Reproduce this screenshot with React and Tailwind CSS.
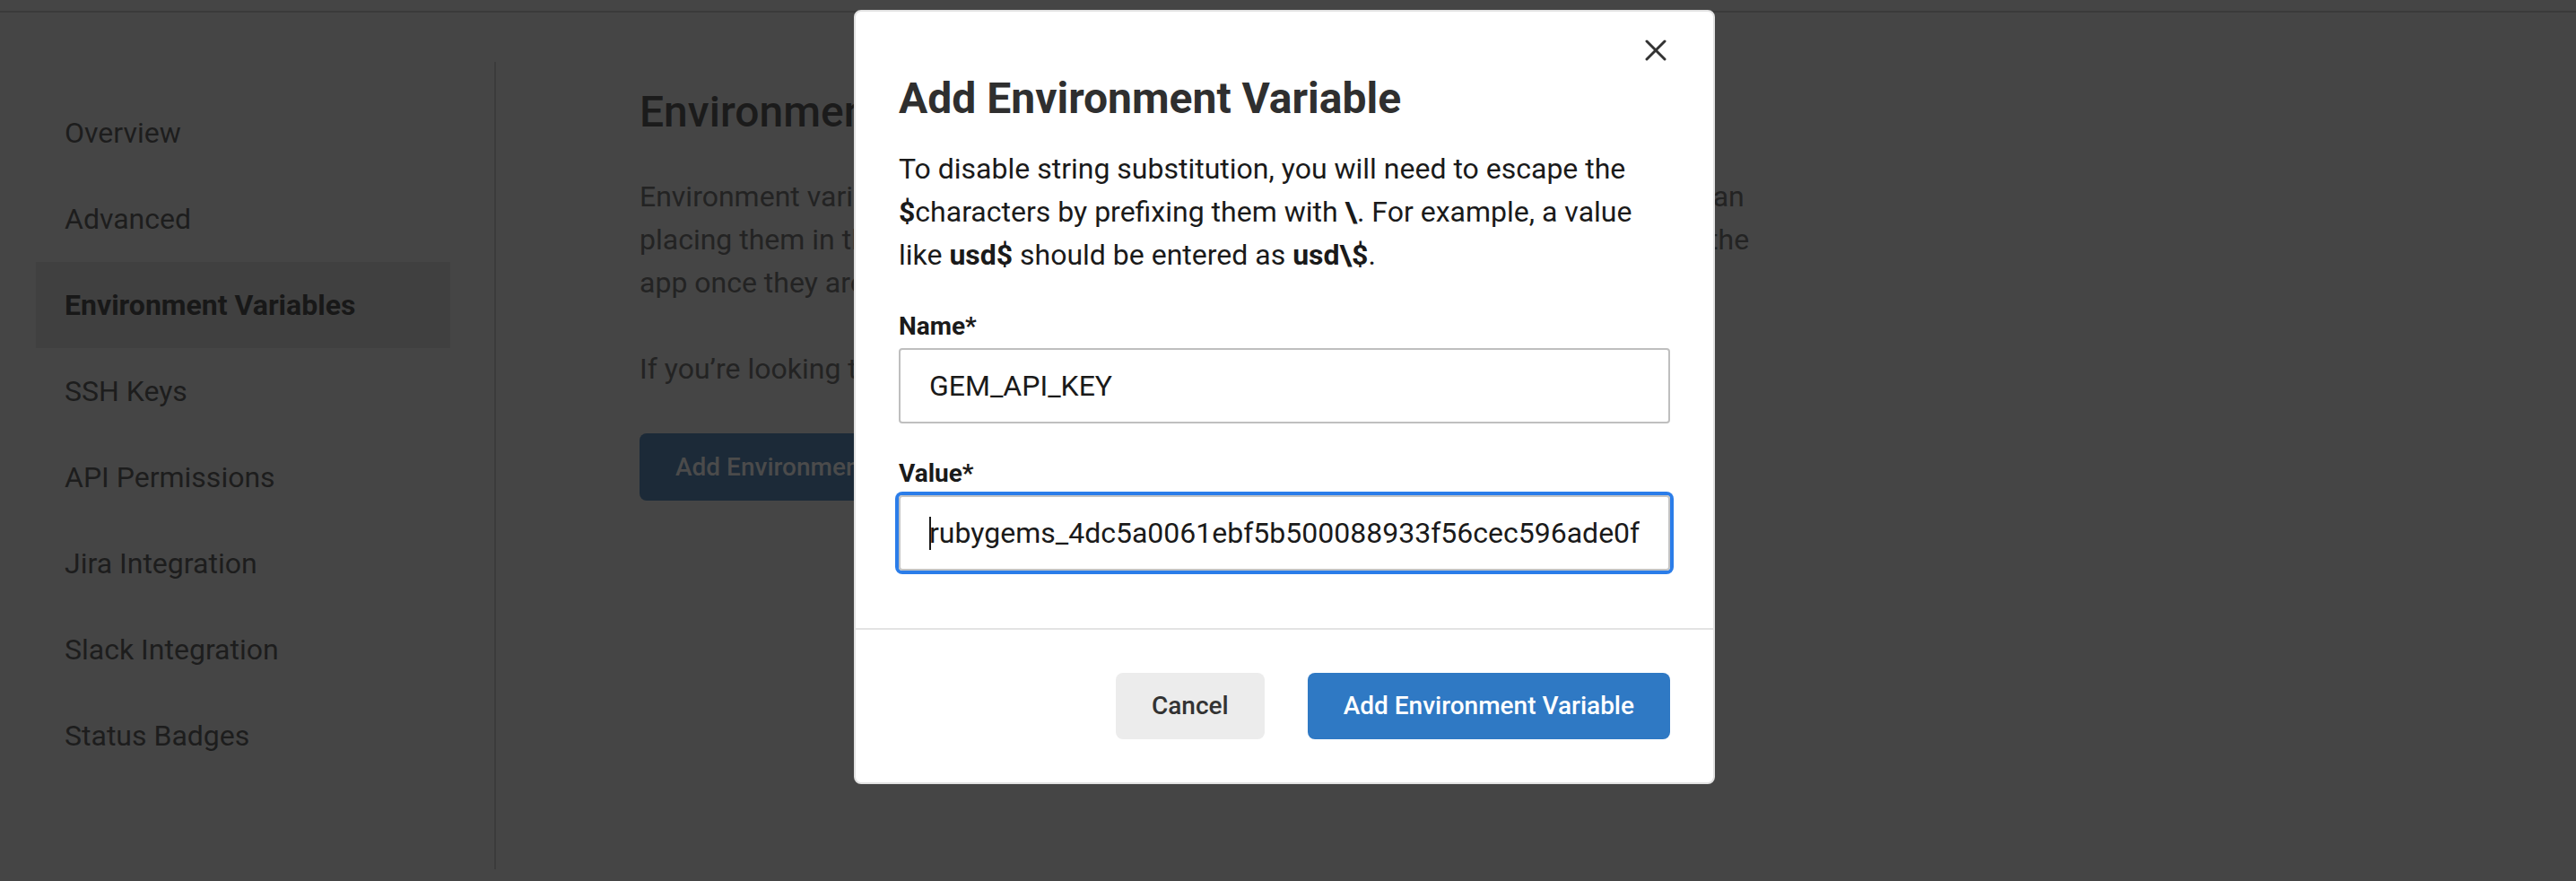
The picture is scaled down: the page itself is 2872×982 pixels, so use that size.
import { useState } from "react";

const navItems = [
  "Overview",
  "Advanced",
  "Environment Variables",
  "SSH Keys",
  "API Permissions",
  "Jira Integration",
  "Slack Integration",
  "Status Badges",
];

function CloseIcon() {
  return (
    <svg width="24" height="24" viewBox="0 0 24 24" fill="none" stroke="#333333" strokeWidth="3" strokeLinecap="round">
      <path d="M2 2 L22 22" />
      <path d="M22 2 L2 22" />
    </svg>
  );
}

export default function App() {
  const [name, setName] = useState("GEM_API_KEY");
  const [value, setValue] = useState("rubygems_4dc5a0061ebf5b500088933f56cec596ade0f");
  const active = "Environment Variables";

  return (
    <div className="relative h-[982px] w-full overflow-hidden bg-[#454545] font-[Roboto,'Liberation_Sans',sans-serif]">
      {/* --- barre du haut (coupée) --- */}
      <div className="h-[14px] border-b-2 border-[#3a3a3a]" />

      <div className="flex">
        {/* --- MENU LATERAL --- */}
        <nav className="mt-[55px] h-[900px] w-[553px] shrink-0 border-r-2 border-[#3b3b3b] pt-[31px]">
          {navItems.map((item) => (
            <div
              key={item}
              className={
                item === active
                  ? "ml-[40px] flex h-[96px] w-[462px] items-center bg-[#404040] pl-[32px] text-[32px] font-bold text-[#181818]"
                  : "ml-[40px] flex h-[96px] w-[462px] items-center pl-[32px] text-[32px] text-[#1d1d1d]"
              }
            >
              {item}
            </div>
          ))}
        </nav>

        {/* --- CONTENU --- */}
        <main className="mt-[55px] pl-[160px] pt-[28px]">
          <h1 className="text-[48px] font-medium leading-[56px] text-[#1b1b1b]">Environment Variables</h1>
          <p className="mt-[42px] text-[32px] leading-[48px] text-[#232323]">
            Environment variables let you add sensitive data (e.g. API keys) to your jobs rather than
            <br />
            placing them in the repository. These values will be available to all of your tasks and the
            <br />
            app once they are added, and are hidden from the build output.
          </p>
          <p className="mt-[48px] text-[32px] leading-[48px] text-[#232323]">
            If you’re looking to share variables across projects, use Contexts.
          </p>
          <button className="mt-[48px] h-[75px] rounded-[8px] bg-[#1c2a38] px-[40px] text-[28px] font-medium text-[#4b4b4b]">
            Add Environment Variable
          </button>
        </main>
      </div>

      {/* --- MODALE --- */}
      <div className="absolute left-[952px] top-[11px] w-[960px] rounded-[8px] border-2 border-[#e2e2e2] bg-white">
        <button aria-label="Fermer" className="absolute right-[52px] top-[31px]">
          <CloseIcon />
        </button>

        <div className="px-[48px] pb-[64px] pt-[67px]">
          <h2 className="text-[48px] font-bold leading-[60px] text-[#2f2f2f]">Add Environment Variable</h2>
          <p className="mt-[24px] text-[32px] leading-[48px] text-[#1a1a1a]">
            To disable string substitution, you will need to escape the <b>$</b>characters by prefixing them
            with <b>\</b>. For example, a value like <b>usd$</b> should be entered as <b>usd\$</b>.
          </p>

          <label className="mt-[40px] block text-[28px] font-bold leading-[32px] text-[#1a1a1a]">Name*</label>
          <input
            value={name}
            onChange={(e) => setName(e.target.value)}
            className="mt-[8px] block h-[84px] w-full rounded-[4px] border-2 border-[#bfbfbf] px-[32px] text-[32px] text-[#1a1a1a] outline-none"
          />

          <label className="mt-[40px] block text-[28px] font-bold leading-[32px] text-[#1a1a1a]">Value*</label>
          <div className="relative mt-[8px]">
            <input
              value={value}
              onChange={(e) => setValue(e.target.value)}
              className="block h-[84px] w-full rounded-[4px] border-2 border-[#c4c4c4] px-[32px] text-[32px] text-[#1a1a1a] outline-none ring-4 ring-[#2b7de9]"
            />
            {/* curseur de saisie */}
            <span className="absolute left-[34px] top-[24px] h-[37px] w-[2px] bg-[#1a1a1a]" />
          </div>
        </div>

        <div className="flex justify-end gap-[48px] border-t-2 border-[#e3e3e3] px-[48px] py-[48px]">
          <button className="h-[74px] rounded-[8px] bg-[#ececec] px-[40px] text-[28px] font-medium text-[#333333]">
            Cancel
          </button>
          <button className="h-[74px] rounded-[8px] bg-[#2f79c4] px-[40px] text-[28px] font-medium text-white">
            Add Environment Variable
          </button>
        </div>
      </div>
    </div>
  );
}
